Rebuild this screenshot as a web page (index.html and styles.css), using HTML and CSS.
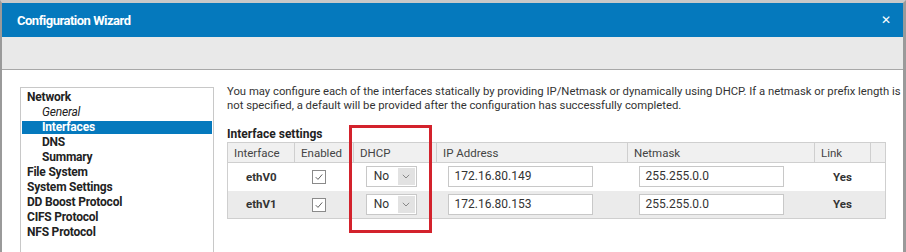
FILE: index.html
```html
<!DOCTYPE html>
<html lang="en">
<head>
    <meta charset="UTF-8">
    <title>Configuration Wizard</title>
    <link rel="stylesheet" href="styles.css">
</head>
<body>
    <div class="dialog">
        <!-- Title bar -->
        <div class="titlebar">
            <span class="title">Configuration Wizard</span>
            <span class="close">&#x2715;</span>
        </div>
        <div class="toolbar"></div>

        <div class="dialog-body">
            <!-- Wizard steps -->
            <ul class="steps">
                <li class="step">Network</li>
                <li class="step sub italic">General</li>
                <li class="step sub active">Interfaces</li>
                <li class="step sub">DNS</li>
                <li class="step sub">Summary</li>
                <li class="step">File System</li>
                <li class="step">System Settings</li>
                <li class="step">DD Boost Protocol</li>
                <li class="step">CIFS Protocol</li>
                <li class="step">NFS Protocol</li>
            </ul>

            <div class="content">
                <p class="intro">You may configure each of the interfaces statically by providing IP/Netmask or dynamically using DHCP. If a netmask or prefix length is not specified, a default will be provided after the configuration has successfully completed.</p>
                <h3 class="section-title">Interface settings</h3>
                <table class="iface-table">
                    <colgroup>
                        <col style="width:67px">
                        <col style="width:59px">
                        <col style="width:83px">
                        <col style="width:191px">
                        <col style="width:187px">
                        <col style="width:56px">
                        <col style="width:15px">
                    </colgroup>
                    <thead>
                        <tr>
                            <th>Interface</th>
                            <th>Enabled</th>
                            <th>DHCP</th>
                            <th>IP Address</th>
                            <th>Netmask</th>
                            <th>Link</th>
                            <th></th>
                        </tr>
                    </thead>
                    <tbody>
                        <tr>
                            <td class="name">ethV0</td>
                            <td class="center"><span class="checkbox"><svg viewBox="0 0 14 14"><path d="M3.2 7.2L5.8 9.8L10.8 4" fill="none" stroke="#555" stroke-width="1.1"/></svg></span></td>
                            <td><div class="select"><span class="select-value">No</span><span class="select-arrow"><svg viewBox="0 0 8 5"><path d="M0.8 0.8L4 4L7.2 0.8" fill="none" stroke="#888" stroke-width="1"/></svg></span></div></td>
                            <td><div class="text-input">172.16.80.149</div></td>
                            <td><div class="text-input">255.255.0.0</div></td>
                            <td class="link">Yes</td>
                            <td></td>
                        </tr>
                        <tr class="alt">
                            <td class="name">ethV1</td>
                            <td class="center"><span class="checkbox"><svg viewBox="0 0 14 14"><path d="M3.2 7.2L5.8 9.8L10.8 4" fill="none" stroke="#555" stroke-width="1.1"/></svg></span></td>
                            <td><div class="select"><span class="select-value">No</span><span class="select-arrow"><svg viewBox="0 0 8 5"><path d="M0.8 0.8L4 4L7.2 0.8" fill="none" stroke="#888" stroke-width="1"/></svg></span></div></td>
                            <td><div class="text-input">172.16.80.153</div></td>
                            <td><div class="text-input">255.255.0.0</div></td>
                            <td class="link">Yes</td>
                            <td></td>
                        </tr>
                    </tbody>
                </table>
            </div>
        </div>

        <!-- Annotation around DHCP column -->
        <div class="highlight-box"></div>
    </div>
</body>
</html>
```

FILE: styles.css
```css
* {
    margin: 0;
    padding: 0;
    box-sizing: border-box;
}

body {
    font-family: Roboto, "Liberation Sans", sans-serif;
    font-size: 12px;
    color: #333;
    background-color: #fff;
    overflow: hidden;
}

.dialog {
    position: relative;
    width: 906px;
    height: 252px;
    overflow: hidden;
    border-top: 3px solid #c9c9c9;
    border-left: 2px solid #9a9a9a;
    border-right: 3px solid #9a9a9a;
    background-color: #fff;
}

/* Title bar */
.titlebar {
    height: 34px;
    background-color: #0579bd;
    color: #fff;
    display: flex;
    align-items: center;
    justify-content: space-between;
    padding: 0 12px 0 15px;
}

.title {
    font-size: 13px;
    font-weight: bold;
    letter-spacing: -0.5px;
}

.close {
    font-size: 12px;
    font-family: "DejaVu Sans", sans-serif;
}

.toolbar {
    height: 33px;
    background-color: #e9e9e9;
    border-bottom: 1px solid #a8a8a8;
}

.dialog-body {
    display: flex;
    padding-left: 18px;
}

/* Wizard steps */
.steps {
    list-style: none;
    flex-shrink: 0;
    width: 194px;
    height: 200px;
    margin-top: 17px;
    padding: 2px 1px;
    border: 1px solid #c8c8c8;
    font-family: Roboto, sans-serif;
    font-size: 12px;
    font-weight: bold;
    letter-spacing: -0.2px;
    color: #222;
}

.step {
    height: 15px;
    line-height: 15px;
    padding-left: 5px;
}

.step.sub {
    padding-left: 20px;
}

.step.italic {
    font-style: italic;
    font-weight: normal;
}

.step.active {
    background-color: #0579bd;
    color: #fff;
    height: 13px;
    line-height: 13px;
    margin: 1px 0;
}

/* Main content */
.content {
    padding-left: 13px;
    padding-top: 15px;
    width: 690px;
    flex-shrink: 0;
}

.intro {
    width: 676px;
    font-size: 11.3px;
    line-height: 14px;
    color: #333;
}

.section-title {
    font-size: 12px;
    font-weight: bold;
    margin-top: 14px;
    line-height: 14px;
    color: #222;
}

.iface-table {
    margin-top: 1px;
    width: 658px;
    border-collapse: collapse;
    table-layout: fixed;
    border: 1px solid #cfcfcf;
    font-size: 11.5px;
}

.iface-table th {
    height: 20px;
    background-color: #f0f0f0;
    border: 1px solid #cfcfcf;
    font-weight: normal;
    text-align: left;
    padding-left: 6px;
    color: #444;
}

.iface-table td {
    height: 28px;
    padding: 0 10px;
}

.iface-table tr.alt td {
    background-color: #ebebeb;
}

.name {
    font-weight: bold;
    text-align: center;
    color: #333;
}

.center {
    text-align: center;
}

.iface-table td.center {
    padding: 0 10px 0 0;
}

.link {
    font-weight: bold;
    text-align: center;
}

.checkbox {
    display: inline-block;
    width: 14px;
    height: 14px;
    border: 1px solid #8a8a8a;
    background-color: #fff;
    vertical-align: middle;
}

.checkbox svg {
    display: block;
    width: 12px;
    height: 12px;
}

.select {
    display: flex;
    width: 51px;
    height: 21px;
    border: 1px solid #c8c8c8;
    background-color: #fff;
    margin-left: 2px;
}

.select-value {
    flex: 1;
    text-align: center;
    line-height: 19px;
    font-size: 12px;
}

.select-arrow {
    width: 17px;
    margin: 1px;
    background-color: #e2e2e2;
    display: flex;
    align-items: center;
    justify-content: center;
}

.select-arrow svg {
    width: 8px;
    height: 5px;
}

.text-input {
    width: 145px;
    height: 21px;
    line-height: 19px;
    border: 1px solid #c8c8c8;
    background-color: #fff;
    padding-left: 6px;
    margin-left: 1px;
    font-size: 12px;
}

/* Red annotation frame */
.highlight-box {
    position: absolute;
    left: 347px;
    top: 122px;
    width: 83px;
    height: 108px;
    border: 3px solid #d3222c;
}
```
